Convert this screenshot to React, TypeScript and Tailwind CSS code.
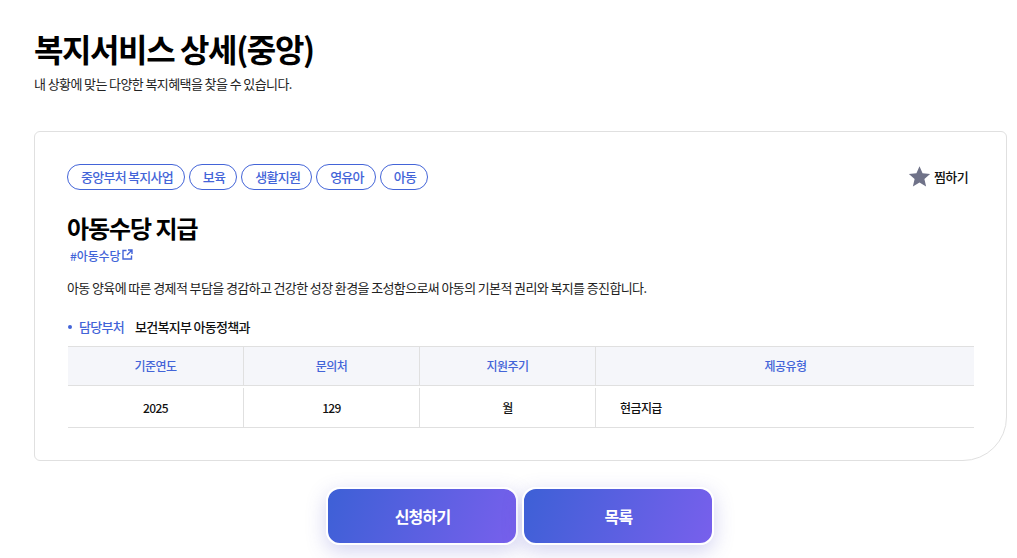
import React from "react";

const font = { fontFamily: '"Noto Sans CJK KR", "Noto Sans", sans-serif' };

const tags = ["중앙부처 복지사업", "보육", "생활지원", "영유아", "아동"];

export default function App() {
  return (
    <div className="h-[558px] w-[1017px] overflow-hidden bg-white pl-[34px] pr-[10px]" style={font}>
      <h1 className="pt-[27px] text-[32px] font-bold leading-[42px] tracking-[-1.4px] text-black">복지서비스 상세(중앙)</h1>
      <p className="mt-[5px] text-[13px] leading-[20px] tracking-[-0.6px] text-[#222]">내 상황에 맞는 다양한 복지혜택을 찾을 수 있습니다.</p>

      <section className="mt-[37px] h-[330px] rounded-tl-[6px] rounded-tr-[6px] rounded-bl-[6px] rounded-br-[44px] border border-[#e0e0e0] px-[32px] pt-[32px]">
        <div className="flex items-center justify-between pr-[6px]">
          <div className="flex gap-[4px]">
            {tags.map((t) => (
              <span key={t} className="flex h-[26px] items-center rounded-full border border-[#4364d8] pl-[13px] pr-[11px] text-[13px] font-medium tracking-[-0.75px] text-[#4364d8]">
                {t}
              </span>
            ))}
          </div>
          <div className="flex items-center gap-[3px]">
            <svg width="23" height="23" viewBox="0 0 24 24" fill="#6f7288" className="-translate-y-[1px]">
              <path d="M12 1.2l3.2 7.3 7.9.8-6 5.3 1.8 7.8L12 18.3l-6.9 4.1 1.8-7.8-6-5.3 7.9-.8z" />
            </svg>
            <span className="text-[13px] font-medium tracking-[-0.65px] text-[#111]">찜하기</span>
          </div>
        </div>

        <h2 className="mt-[20px] text-[24px] font-bold leading-[36px] tracking-[-1.05px] text-black">아동수당 지급</h2>
        <a className="ml-[3px] mt-[1px] flex h-[15px] items-start overflow-hidden text-[12px] font-medium leading-[18px] tracking-[-0.1px] text-[#4364d8]">
          #아동수당
          <svg className="ml-[1px] mt-[2px]" width="11" height="11" viewBox="0 0 11 11" fill="none" stroke="#4364d8" strokeWidth="1.4">
            <path d="M4.5 1.5H1v8.5h8.5V6.5M6 1h4v4M10 1L5 6" />
          </svg>
        </a>
        <p className="mt-[16px] text-[13px] leading-[20px] tracking-[-0.62px] text-[#222]">
          아동 양육에 따른 경제적 부담을 경감하고 건강한 성장 환경을 조성함으로써 아동의 기본적 권리와 복지를 증진합니다.
        </p>

        <div className="mt-[19px] flex items-center text-[13px] leading-[20px] tracking-[-0.7px]">
          <span className="ml-[1px] h-[4px] w-[4px] rounded-full bg-[#4364d8]" />
          <span className="ml-[7px] font-medium text-[#4364d8]">담당부처</span>
          <span className="ml-[11px] font-medium text-[#111]">보건복지부 아동정책과</span>
        </div>

        <div className="ml-[1px] mt-[9px] grid grid-cols-[176px_176px_176px_1fr] border-t border-[#e0e0e0] text-center text-[12px] tracking-[-0.6px]">
          {["기준연도", "문의처", "지원주기", "제공유형"].map((h, i) => (
            <div key={h} className={`flex h-[39px] items-center justify-center border-b border-[#e0e0e0] bg-[#f5f6fa] font-medium text-[#4364d8] ${i < 3 ? "border-r" : "pl-[1px]"}`}>
              {h}
            </div>
          ))}
          <div className="col-span-4 grid grid-cols-[176px_176px_176px_1fr] border-b border-[#e0e0e0] pt-[2px] text-[#111]">
            <div className="flex h-[39px] items-center justify-center border-r border-[#e0e0e0] font-medium">2025</div>
            <div className="flex h-[39px] items-center justify-center border-r border-[#e0e0e0] font-medium">129</div>
            <div className="flex h-[39px] items-center justify-center border-r border-[#e0e0e0] font-medium">월</div>
            <div className="flex h-[39px] items-center pl-[24px] font-medium">현금지급</div>
          </div>
        </div>
      </section>

      <div className="mt-[26px] flex justify-center gap-[4px] pr-[2px]">
        {["신청하기", "목록"].map((b) => (
          <button
            key={b}
            className="h-[58px] w-[192px] rounded-[14px] border-2 border-white bg-linear-110/srgb from-[#3d60d6] to-[#7860ec] pl-[2px] text-[16px] font-bold tracking-[-0.8px] text-white shadow-[0_6px_20px_rgba(80,80,200,0.25)]"
          >
            {b}
          </button>
        ))}
      </div>
    </div>
  );
}
